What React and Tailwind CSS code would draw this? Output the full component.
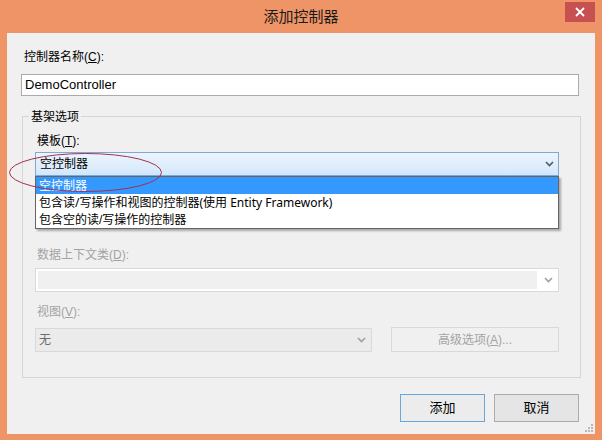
import React from "react";

const F = "font-['Liberation_Sans','Noto_Sans_CJK_SC',sans-serif]";

function Chevron({ color = "#555" }) {
  return (
    <svg width="9" height="6" viewBox="0 0 9 6">
      <path d="M1 1 L4.5 4.5 L8 1" fill="none" stroke={color} strokeWidth="1.6" />
    </svg>
  );
}

export default function App() {
  return (
    <div className={`relative w-[602px] h-[440px] bg-[#ee9466] flex flex-col ${F}`}>
      {/* title bar */}
      <div className="h-[33px] grid grid-cols-[1fr_auto_1fr] items-start">
        <div />
        <div className="pt-[7px] text-[15px] leading-[20px] text-[#1a1a1a]">添加控制器</div>
        <div className="flex justify-end pr-[7px] pt-[2px]">
          <div className="w-[30px] h-[20px] bg-[#c75050] flex items-center justify-center">
            <svg width="10" height="10" viewBox="0 0 10 10">
              <path d="M1 1 L9 9 M9 1 L1 9" stroke="#fff" strokeWidth="1.8" />
            </svg>
          </div>
        </div>
      </div>

      {/* client */}
      <div className="mx-[7px] mb-[6px] flex-1 bg-[#f0f0f0] flex flex-col text-[12px] leading-[16px] text-[#000]">
        <div className="pt-[16px] pl-[17px]">控制器名称(<span className="underline">C</span>):</div>
        <div className="mt-[9px] ml-[14px] w-[558px] h-[22px] bg-white border border-[#ababab] flex items-center pl-[3px] text-[13px]">
          DemoController
        </div>

        {/* group box */}
        <div className="relative mt-[20px] ml-[15px] w-[559px] h-[262px] border border-[#d5d5d5] flex flex-col">
          <div className="absolute left-[6px] -top-[8px] px-[2px] bg-[#f0f0f0]">基架选项</div>

          <div className="pt-[16px] pl-[14px]">模板(<span className="underline">T</span>):</div>
          <div className="relative mt-[3px] ml-[12px] w-[524px] h-[24px]">
            <div className="w-full h-full border border-[#7ea9d3] bg-gradient-to-b from-[#edf5fd] to-[#d3e7fb] flex items-center justify-between pl-[4px] pr-[4px]">
              <span>空控制器</span>
              <Chevron color="#4d5a66" />
            </div>
            {/* open list */}
            <div className="absolute left-0 top-[24px] w-[524px] h-[53px] bg-white border border-[#646464] shadow-[2px_2px_2px_rgba(0,0,0,0.3)] flex flex-col z-10">
              <div className="h-[17px] bg-[#3399ff] text-white pl-[3px] flex items-center">空控制器</div>
              <div className="h-[18px] pl-[3px] flex items-center font-['Noto_Sans','Noto_Sans_CJK_SC',sans-serif]">包含读/写操作和视图的控制器(使用 Entity Framework)</div>
              <div className="h-[16px] pl-[3px] flex items-center">包含空的读/写操作的控制器</div>
            </div>
          </div>

          <div className="mt-[71px] pl-[14px] text-[#a3a3a3]">数据上下文类(<span className="underline">D</span>):</div>
          <div className="mt-[5px] ml-[12px] w-[524px] h-[24px] border border-[#d9d9d9] flex">
            <div className="flex-1 border-2 border-white bg-[#f0f0f0]" />
            <div className="w-[19px] bg-white flex items-center justify-center">
              <Chevron color="#a0a0a0" />
            </div>
          </div>

          <div className="mt-[12px] pl-[14px] text-[#a3a3a3]">视图(<span className="underline">V</span>):</div>
          <div className="mt-[7px] ml-[12px] flex items-start gap-[19px]">
            <div className="mt-[1px] w-[337px] h-[24px] border border-[#d9d9d9] bg-[#ebebeb] flex items-center justify-between pl-[3px] pr-[5px] text-[#6d6d6d]">
              <span>无</span>
              <Chevron color="#a0a0a0" />
            </div>
            <div className="w-[168px] h-[25px] border border-[#d9d9d9] bg-[#f0f0f0] flex items-center justify-center text-[#a3a3a3]">
              高级选项(<span className="underline">A</span>)...
            </div>
          </div>
        </div>

        {/* buttons */}
        <div className="mt-[16px] flex justify-end gap-[9px] pr-[16px]">
          <div className="w-[85px] h-[28px] border border-[#67a6df] bg-[#ececec] flex items-center justify-center text-[13px]">添加</div>
          <div className="w-[85px] h-[28px] border border-[#acacac] bg-[#e5e5e5] flex items-center justify-center text-[13px]">取消</div>
        </div>
        <div className="flex-1 flex justify-end items-end pr-[2px] pb-[2px]">
          <svg width="8" height="8" viewBox="0 0 8 8">
            <rect x="6" y="0" width="2" height="2" fill="#b8b8b8" />
            <rect x="3" y="3" width="2" height="2" fill="#b8b8b8" />
            <rect x="6" y="3" width="2" height="2" fill="#b8b8b8" />
            <rect x="0" y="6" width="2" height="2" fill="#b8b8b8" />
            <rect x="3" y="6" width="2" height="2" fill="#b8b8b8" />
            <rect x="6" y="6" width="2" height="2" fill="#b8b8b8" />
          </svg>
        </div>
      </div>

      {/* red annotation ellipse */}
      <svg className="absolute left-0 top-0 pointer-events-none z-20" width="602" height="440">
        <ellipse cx="85.5" cy="172.5" rx="76" ry="19" fill="none" stroke="#a3304f" strokeWidth="1" />
      </svg>
    </div>
  );
}
